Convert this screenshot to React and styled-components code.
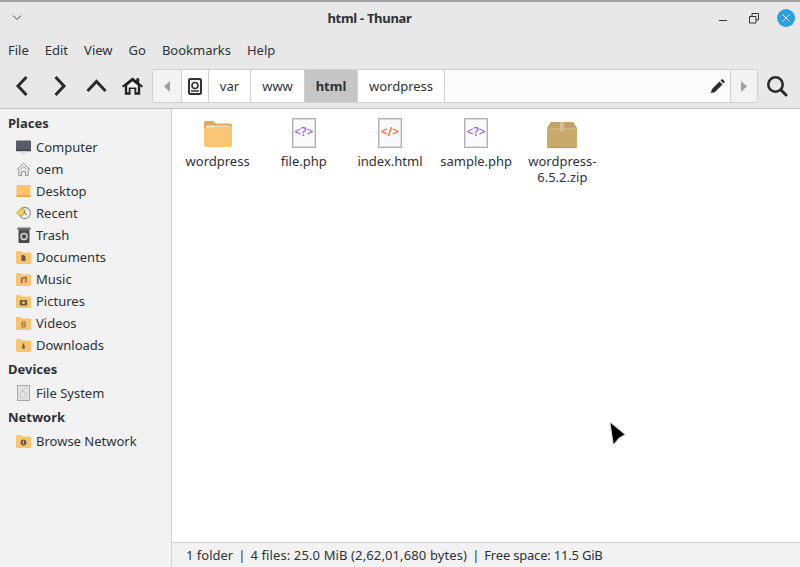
import React from 'react';
import styled, { createGlobalStyle } from 'styled-components';

const Global = createGlobalStyle`
  html, body { margin: 0; padding: 0; height: 100%; overflow: hidden; }
  body { font-family: "Noto Sans", "Open Sans", sans-serif; font-size: 13px; color: #2f3136; }
`;

const Win = styled.div`
  position: relative;
  width: 800px;
  height: 567px;
  box-sizing: border-box;
  border-top: 2px solid #a3a3a3;
  display: flex;
  flex-direction: column;
  background: #e8e8e8;
`;

const TitleBar = styled.div`
  height: 32px;
  display: flex;
  align-items: center;
  padding: 0 5px 0 10px;
`;

const Title = styled.div`
  flex: 1;
  text-align: center;
  font-weight: 700;
  font-size: 13px;
  letter-spacing: -0.3px;
`;

const WinButtons = styled.div`
  display: flex;
  align-items: center;
  gap: 15px;
`;

const CloseBtn = styled.div`
  width: 18px;
  height: 18px;
  border-radius: 50%;
  background: #28a0e3;
  display: flex;
  align-items: center;
  justify-content: center;
`;

const MenuBar = styled.div`
  height: 32px;
  display: flex;
  align-items: center;
  padding-left: 8px;
  gap: 16px;
`;

const Toolbar = styled.div`
  height: 43px;
  box-sizing: border-box;
  border-bottom: 1px solid #c4c4c4;
  display: flex;
  align-items: center;
  padding: 0 0 2px 3px;
`;

const ToolBtn = styled.div`
  width: 37px;
  display: flex;
  justify-content: center;
  flex-shrink: 0;
`;

const PathBar = styled.div`
  width: 606px;
  height: 34px;
  margin: 0 8px 0 1px;
  box-sizing: border-box;
  border: 1px solid #d0d0d0;
  border-radius: 3px;
  background: #fff;
  display: flex;
  flex-shrink: 0;
  overflow: hidden;
`;

const Stepper = styled.div`
  width: ${p => p.$w}px;
  display: flex;
  align-items: center;
  justify-content: center;
  background: #f3f3f3;
  flex-shrink: 0;
  border-${p => p.$side}: 1px solid #d0d0d0;
`;

const Crumb = styled.div`
  width: ${p => p.$w}px;
  box-sizing: border-box;
  display: flex;
  align-items: center;
  justify-content: center;
  flex-shrink: 0;
  border-right: 1px solid #d0d0d0;
  background: ${p => (p.$active ? '#c6c6c6' : '#fff')};
  font-weight: ${p => (p.$active ? 700 : 400)};
`;

const PathRest = styled.div`
  flex: 1;
  display: flex;
  align-items: center;
  justify-content: flex-end;
  padding-right: 5px;
  background: #fcfcfc;
`;

const Body = styled.div`
  flex: 1;
  display: flex;
  min-height: 0;
`;

const Sidebar = styled.div`
  width: 172px;
  box-sizing: border-box;
  flex-shrink: 0;
  background: #f2f2f2;
  border-right: 1px solid #cfcfcf;
  padding-top: 3px;
  display: flex;
  flex-direction: column;
  gap: 2px;
`;

const Heading = styled.div`
  height: 22px;
  line-height: 22px;
  padding-left: 8px;
  margin-bottom: 2px;
  font-weight: 700;
`;

const Row = styled.div`
  height: 22px;
  display: flex;
  align-items: center;
  padding-left: 16px;
  gap: 5px;
`;

const RowIcon = styled.span`
  width: 15px;
  height: 16px;
  display: flex;
  align-items: center;
  justify-content: center;
`;

const Section = styled.div`
  display: flex;
  flex-direction: column;
`;

const Main = styled.div`
  flex: 1;
  display: flex;
  flex-direction: column;
  background: #fff;
`;

const Files = styled.div`
  flex: 1;
  display: grid;
  grid-template-columns: repeat(5, 86.2px);
  align-content: start;
  padding: 7px 0 0 2.5px;
`;

const FileItem = styled.div`
  display: flex;
  flex-direction: column;
  align-items: center;
  text-align: center;
  line-height: 16px;
`;

const IconSlot = styled.div`
  height: 32px;
  margin-bottom: 5px;
  display: flex;
  align-items: flex-end;
  justify-content: center;
`;

const CodeIcon = styled.div`
  width: 24px;
  height: 30px;
  box-sizing: border-box;
  border: 1px solid #b0b0b0;
  box-shadow: inset 0 0 0 1px #dcdcdc;
  background: #f9f9fb;
  display: flex;
  align-items: center;
  justify-content: center;
  padding-bottom: 2px;
  font-size: 12px;
  font-weight: 500;
  color: ${p => p.$color};
`;

const FolderSvg = styled.svg`
  margin-bottom: 1px;
`;

const Status = styled.div`
  height: 24px;
  background: #f2f2f2;
  border-top: 1px solid #cfcfcf;
  display: flex;
  align-items: center;
  padding-left: 14px;
`;

const Segment = styled.span`
  letter-spacing: ${p => p.$ls || 0}px;
`;

const Sep = styled.span`
  margin: 0 5px;
`;

const Cursor = styled.svg`
  position: absolute;
  left: 606px;
  top: 416px;
`;

const Stroke = ({ w = 24, h = 24, d, sw = 3, color = '#2b2b2b' }) => (
  <svg width={w} height={h} viewBox={`0 0 ${w} ${h}`} fill="none" stroke={color} strokeWidth={sw}>
    <path d={d} />
  </svg>
);

const HomeIcon = () => (
  <svg width="23" height="20" viewBox="0 0 24 20">
    <path d="M1 10 12 1l4 3.3V2h3v4.8L23 10l-1.3 1.6L20 10.2V19h-6v-6h-4v6H4v-8.800L2.300 11.600Z" fill="#222" />
    <path d="M6.500 9.500 12 5l5.500 4.500V16.500H16V11.500H8v5H6.500Z" fill="#fff" />
  </svg>
);

const Pencil = () => (
  <svg width="15" height="15" viewBox="0 0 15 15">
    <path d="M1 14l.8-3.800L9.500 2.500l3 3L4.800 13.200Z M10.500 1.500 11.500.6a1 1 0 0 1 1.400 0l1.400 1.400a1 1 0 0 1 0 1.400l-.9 1Z" fill="#2b2b2b" />
  </svg>
);

const SearchIcon = () => (
  <svg width="22" height="22" viewBox="0 0 22 22" fill="none" stroke="#2b2b2b">
    <circle cx="9.500" cy="9.500" r="7.200" strokeWidth="2.600" />
    <path d="M14.800 14.800 20 20" strokeWidth="3" strokeLinecap="round" />
  </svg>
);

const Arrow = ({ dir }) => (
  <svg width="7" height="11" viewBox="0 0 7 11">
    <path d={dir === 'left' ? 'M6 0v11L0 5.500Z' : 'M0 0v11l6-5.500Z'} fill="#a0a0a0" />
  </svg>
);

const DriveIcon = () => (
  <svg width="14" height="17" viewBox="0 0 14 17">
    <rect x="1" y="1" width="12" height="15" rx="1.500" fill="#f4f4f4" stroke="#333" strokeWidth="2" />
    <circle cx="7" cy="7.500" r="3" fill="none" stroke="#333" strokeWidth="1.600" />
    <path d="M3 13h8" stroke="#333" strokeWidth="1.500" />
  </svg>
);

const SmallFolder = ({ glyph }) => (
  <svg width="15" height="13" viewBox="0 0 15 13">
    <path d="M0 1.200C0 .500.500 0 1 0h3.500l1.500 1.500h8c.500 0 1 .400 1 1V12a1 1 0 0 1-1 1H1a1 1 0 0 1-1-1Z" fill="#f9c470" />
    {glyph}
  </svg>
);

const g = '#6b5b44';
const glyphs = {
  documents: <path d="M5.500 4h2.500l1.500 1.500V10h-4Z" fill={g} />,
  music: <path d="M5.800 9.500V5.200L10 4.500v4.300M5.800 9.500h-1.300M10 9h-1.300" stroke={g} strokeWidth="1.200" fill="none" />,
  pictures: <><rect x="3.800" y="5" width="7.400" height="5.500" rx="1" fill={g} /><circle cx="7.500" cy="7.700" r="1.400" fill="#f9c470" /></>,
  videos: <path d="M5.500 4.500h4v6h-4Z M6.500 5.500v1.500h2V5.500Z M6.500 8v1.500h2V8Z" fill={g} fillRule="evenodd" opacity="0.8" />,
  downloads: <path d="M6.700 4.500h1.600v3H10L7.500 10.300 5 7.500h1.700Z" fill={g} />,
  network: <><circle cx="7.500" cy="7.500" r="2.900" fill={g} /><path d="M7.500 5.800v3" stroke="#f9c470" strokeWidth="1" /></>,
};

const Computer = () => (
  <svg width="16" height="15" viewBox="0 0 16 15">
    <rect x="0" y="0" width="16" height="10.500" rx="1" fill="#575c66" />
    <path d="M0 9.500h16v1a1 1 0 0 1-1 1H1a1 1 0 0 1-1-1Z" fill="#3f434b" />
    <path d="M6.500 11.500h3l.8 2.500H5.700Z" fill="#d4d4d6" />
  </svg>
);

const HomePlace = () => (
  <svg width="16" height="15" viewBox="0 0 16 15" fill="none" stroke="#8b8b8b" strokeWidth="1">
    <path d="M.8 7.500 8 1l7.200 6.500" />
    <path d="M3 6.500V14h3V9.500h4V14h3V6.500" fill="#ececec" />
    <path d="M5 7 8 4.500 11 7" />
  </svg>
);

const SideDesktop = () => (
  <svg width="15" height="12" viewBox="0 0 15 12">
    <rect width="14" height="12" x="0.500" rx="0.500" fill="#f9c470" />
    <rect width="14" height="2" x="0.500" y="10" fill="#e0ab58" />
  </svg>
);

const RecentIcon = () => (
  <svg width="17" height="16" viewBox="0 0 17 16">
    <circle cx="10" cy="8" r="6.400" fill="#efefef" stroke="#8c8c8c" strokeWidth="1.200" />
    <path d="M10 4.500v4l2.500 1.500" stroke="#555" fill="none" strokeWidth="1" />
    <path d="M.5 8 7 1.800l2.500 3.500-.8 4.700-4 1.500Z" fill="#f2d04e" stroke="#a38c30" strokeWidth="0.700" />
  </svg>
);

const TrashIcon = () => (
  <svg width="14" height="16" viewBox="0 0 14 16">
    <rect x="0.500" y="0.500" width="13" height="2.500" rx="0.500" fill="#6b6b6b" />
    <rect x="1.500" y="3" width="11" height="13" rx="1" fill="#4c4c4c" />
    <circle cx="7" cy="9.500" r="3" fill="none" stroke="#d8d8d8" strokeWidth="1.500" />
  </svg>
);

const DiskIcon = () => (
  <svg width="13" height="16" viewBox="0 0 13 16">
    <rect x="0.500" y="0.500" width="12" height="15" fill="#e3e3e3" stroke="#a8a8a8" />
    <circle cx="6" cy="10" r="3.500" fill="none" stroke="#c2c2c2" />
    <path d="M4 7 10 1.500" stroke="#c2c2c2" />
  </svg>
);

const BigFolder = () => (
  <FolderSvg width="28" height="26" viewBox="0 0 28 26">
    <path d="M0 2a2 2 0 0 1 2-2h7l3 2.500h14a2 2 0 0 1 2 2V14H0Z" fill="#dcaa5c" />
    <rect x="2" y="4.500" width="24" height="6" fill="#e8e4da" />
    <path d="M0 6.500h9.500L12 5.500h16V24a2 2 0 0 1-2 2H2a2 2 0 0 1-2-2Z" fill="#f9c674" />
    <path d="M0 25h28v-.500H0Z" fill="#d6cdbd" />
  </FolderSvg>
);

const ZipIcon = () => (
  <svg width="30" height="26" viewBox="0 0 30 26">
    <path d="M4 0h22l4 6v18a2 2 0 0 1-2 2H2a2 2 0 0 1-2-2V6Z" fill="#c9a96c" />
    <path d="M4 0h22l4 6.500H0Z" fill="#c4a263" />
    <path d="M0 6.500h30v.600H0Z" fill="#dcc597" />
    <rect x="13" y="0" width="4" height="9" fill="#d8bf8e" />
    <path d="M0 25h30v1H0Z" fill="#a98c54" opacity="0.6" />
  </svg>
);

const places = [
  ['Computer', <Computer />],
  ['oem', <HomePlace />],
  ['Desktop', <SideDesktop />],
  ['Recent', <RecentIcon />],
  ['Trash', <TrashIcon />],
  ['Documents', <SmallFolder glyph={glyphs.documents} />],
  ['Music', <SmallFolder glyph={glyphs.music} />],
  ['Pictures', <SmallFolder glyph={glyphs.pictures} />],
  ['Videos', <SmallFolder glyph={glyphs.videos} />],
  ['Downloads', <SmallFolder glyph={glyphs.downloads} />],
];

const SideSection = ({ title, items }) => (
  <Section>
    <Heading>{title}</Heading>
    {items.map(([label, icon]) => (
      <Row key={label}>
        <RowIcon>{icon}</RowIcon>
        {label}
      </Row>
    ))}
  </Section>
);

const files = [
  { name: 'wordpress', icon: <BigFolder /> },
  { name: 'file.php', icon: <CodeIcon $color="#9a55dd">{'<?>'}</CodeIcon> },
  { name: 'index.html', icon: <CodeIcon $color="#ee5a24">{'</>'}</CodeIcon> },
  { name: 'sample.php', icon: <CodeIcon $color="#9a55dd">{'<?>'}</CodeIcon> },
  { name: <>wordpress-<br />6.5.2.zip</>, icon: <ZipIcon /> },
];

export default function App() {
  return (
    <Win>
      <Global />
      <TitleBar>
        <Stroke w={14} h={10} sw={1} color="#444" d="M3 2.500 7 6.500l4-4" />
        <Title>html - Thunar</Title>
        <WinButtons>
          <Stroke w={16} h={16} sw={1} color="#333" d="M4 10.500h8" />
          <Stroke w={16} h={16} sw={1} color="#333" d="M3.500 6.500h6.500v6.500H3.500Z M6 6.500V3.500h6.500V10H10" />
          <CloseBtn>
            <Stroke w={10} h={10} sw={1} color="#fff" d="M1 1l8 8M9 1l-8 8" />
          </CloseBtn>
        </WinButtons>
      </TitleBar>
      <MenuBar>
        {['File', 'Edit', 'View', 'Go', 'Bookmarks', 'Help'].map(m => <span key={m}>{m}</span>)}
      </MenuBar>
      <Toolbar>
        <ToolBtn><Stroke d="M16.500 3 8 12l8.500 9" /></ToolBtn>
        <ToolBtn><Stroke d="M8.500 3 17 12l-8.500 9" /></ToolBtn>
        <ToolBtn><Stroke d="M3.500 17 12.500 7.500l9 9.500" /></ToolBtn>
        <ToolBtn><HomeIcon /></ToolBtn>
        <PathBar>
          <Stepper $w={28} $side="right"><Arrow dir="left" /></Stepper>
          <Crumb $w={27}><DriveIcon /></Crumb>
          <Crumb $w={42}>var</Crumb>
          <Crumb $w={54}>www</Crumb>
          <Crumb $w={53} $active>html</Crumb>
          <Crumb $w={87}>wordpress</Crumb>
          <PathRest><Pencil /></PathRest>
          <Stepper $w={26} $side="left"><Arrow dir="right" /></Stepper>
        </PathBar>
        <SearchIcon />
      </Toolbar>
      <Body>
        <Sidebar>
          <SideSection title="Places" items={places} />
          <SideSection title="Devices" items={[['File System', <DiskIcon />]]} />
          <SideSection title="Network" items={[['Browse Network', <SmallFolder glyph={glyphs.network} />]]} />
        </Sidebar>
        <Main>
          <Files>
            {files.map((f, i) => (
              <FileItem key={i}>
                <IconSlot>{f.icon}</IconSlot>
                <span>{f.name}</span>
              </FileItem>
            ))}
          </Files>
          <Status>
            <Segment>1 folder</Segment>
            <Sep>|</Sep>
            <Segment $ls={0.12}>4 files: 25.0 MiB (2,62,01,680 bytes)</Segment>
            <Sep>|</Sep>
            <Segment $ls={-0.2}>Free space: 11.5 GiB</Segment>
          </Status>
        </Main>
      </Body>
      <Cursor width="22" height="28" viewBox="0 0 22 28">
        <path d="M4 5.500C4 4.500 5 4.500 5.500 5L19.500 16.500 13.500 20 8.500 26C7.500 26.500 7 26 7 25.500Z" fill="#000" stroke="#ddd" strokeWidth="1.200" strokeLinejoin="round" />
      </Cursor>
    </Win>
  );
}
